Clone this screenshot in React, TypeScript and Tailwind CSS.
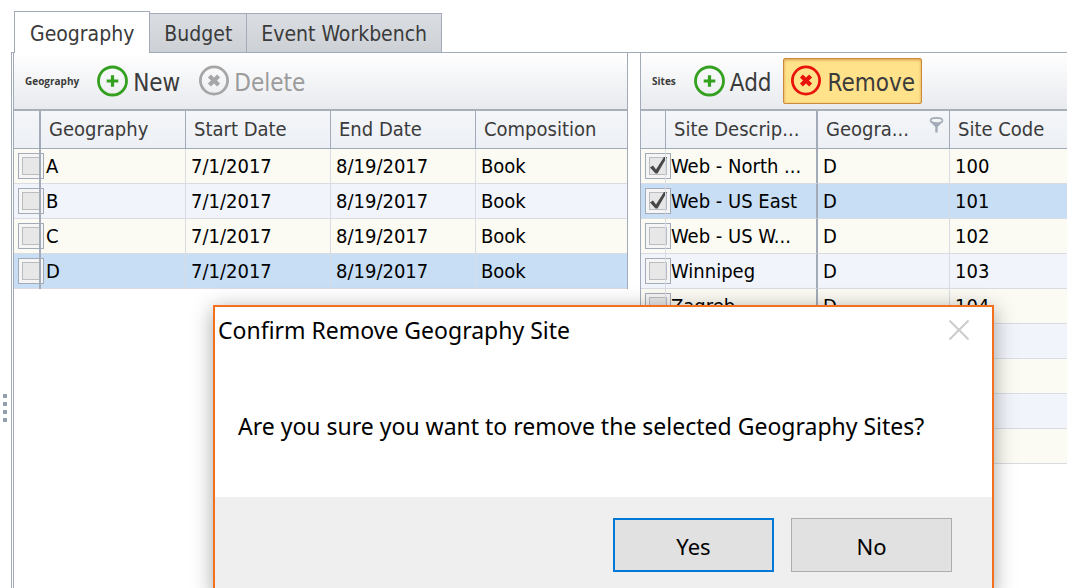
import { useState, type ReactNode } from "react";

const gridFont = "font-['DejaVu_Sans_Condensed','DejaVu_Sans',sans-serif]";
const dialogFont = "font-['Noto_Sans',sans-serif]";

function Tab({ active, children }: { active?: boolean; children: ReactNode }) {
  return (
    <button
      type="button"
      role="tab"
      aria-selected={!!active}
      className={
        active
          ? "relative z-10 h-[42px] border border-b-0 border-[#a4abb8] bg-white px-[15px] pt-1 text-[#3b3b3b]"
          : "h-10 border border-l-0 border-[#a4abb8] bg-linear-to-b from-[#dadee3] to-[#cdd1d6] px-[14px] pt-1 text-[#3b3b3b]"
      }
    >
      {children}
    </button>
  );
}

function CircleIcon({ kind, color }: { kind: "plus" | "cross"; color: string }) {
  return (
    <svg viewBox="0 0 32 32" className="size-8 shrink-0" fill="none" stroke={color} aria-hidden="true">
      {kind === "plus" ? (
        <>
          <circle cx="15.500" cy="16" r="14" strokeWidth="2.800" />
          <path d="M15.500 10.200v11.600M9.700 16h11.600" strokeWidth="3.200" />
        </>
      ) : (
        <>
          <circle cx="16" cy="15.500" r="13.600" strokeWidth="2.800" />
          <path d="M11.400 10.900l9.200 9.200M20.600 10.900l-9.200 9.200" strokeWidth="4.200" />
        </>
      )}
    </svg>
  );
}

function Toolbar({ title, children }: { title: string; children: ReactNode }) {
  return (
    <div className="flex h-[58px] items-center border-b-2 border-[#a9afba] bg-linear-to-b from-white to-[#e8eaee] pl-[11px] text-[24px] text-[#3b3b3b]">
      <span className="mr-[14px] font-['Open_Sans',sans-serif] text-[10px] font-bold">{title}</span>
      {children}
    </div>
  );
}

function ToolButton({ icon, color, disabled, highlighted, children }: {
  icon: "plus" | "cross";
  color: string;
  disabled?: boolean;
  highlighted?: boolean;
  children: ReactNode;
}) {
  return (
    <button
      type="button"
      disabled={disabled}
      className={
        "flex h-[46px] items-center rounded-xs border disabled:text-[#9b9b9b] " +
        (highlighted
          ? "gap-1.5 border-[#c98a3c] bg-[#ffe28a] px-[6px] shadow-[inset_0_1px_3px_#d99a4a]"
          : "gap-1 border-transparent px-[3px]")
      }
    >
      <CircleIcon kind={icon} color={color} />
      <span className="pt-1">{children}</span>
    </button>
  );
}

function RowCheck({ label, initial }: { label: string; initial?: boolean }) {
  const [checked, setChecked] = useState(!!initial);
  return (
    <span className="relative block size-[26px] border border-[#a4abb8] bg-[#f5f5f5] p-[3px]">
      <input
        type="checkbox"
        aria-label={label}
        checked={checked}
        onChange={() => setChecked(!checked)}
        className="peer block size-[18px] appearance-none border border-[#b9bcc0] bg-[#e7e7e7]"
      />
      <svg viewBox="0 0 26 26" className="pointer-events-none absolute -inset-px hidden size-[26px] peer-checked:block" aria-hidden="true">
        <path d="M5 14.500L8 12.500l3 4L19 4h3L12.500 20.500h-2z" fill="#484848" />
      </svg>
    </span>
  );
}

type Divider = "none" | "light" | "strong";

function HeadCell({ divider, children }: { divider: Divider; children?: ReactNode }) {
  const line =
    divider === "strong" ? "border-r-2 border-r-[#a4abb8]" : divider === "light" ? "border-r border-r-[#a4abb8]" : "";
  return (
    <th scope="col" className={`h-[38px] border-b border-b-[#a4abb8] pb-0.5 pl-2 text-left font-normal ${line}`}>
      {children}
    </th>
  );
}

function BodyCell({ divider, children }: { divider: Divider; children?: ReactNode }) {
  const line =
    divider === "strong" ? "border-r-2 border-r-[#a4abb8]" : divider === "light" ? "border-r border-r-[#d9dce2]" : "";
  return <td className={`h-[35px] border-b border-b-[#d9dce2] pl-[5px] ${line}`}>{children}</td>;
}

function CheckCell({ strong, children }: { strong?: boolean; children?: ReactNode }) {
  return (
    <td
      className={
        "relative h-[35px] border-b border-b-[#d9dce2] pl-1 after:absolute after:top-0 after:right-0 after:-bottom-px " +
        (strong ? "after:w-0.5 after:bg-[#a4abb8]" : "after:w-px after:bg-[#d9dce2]")
      }
    >
      {children}
    </td>
  );
}

const tableClass = "w-full table-fixed border-separate border-spacing-0 text-[20px] leading-6 whitespace-nowrap text-black";
const headClass = "bg-linear-to-b from-[#f4f6f9] to-[#eceff4] text-[#3b3b3b]";

function rowColor(index: number, selected: boolean) {
  if (selected) return "bg-[#c8def4]";
  return index % 2 === 0 ? "bg-[#fbfbf3]" : "bg-[#f1f4fa]";
}

function GeographyGrid() {
  return (
    <table className={tableClass}>
      <colgroup>
        <col className="w-[27px]" />
        <col className="w-[145px]" />
        <col className="w-[145px]" />
        <col className="w-[145px]" />
        <col />
      </colgroup>
      <thead>
        <tr className={headClass}>
          <HeadCell divider="strong" />
          <HeadCell divider="light">Geography</HeadCell>
          <HeadCell divider="light">Start Date</HeadCell>
          <HeadCell divider="light">End Date</HeadCell>
          <HeadCell divider="none">Composition</HeadCell>
        </tr>
      </thead>
      <tbody>
        {["A", "B", "C", "D"].map((name, i) => (
          <tr key={name} className={rowColor(i, name === "D")}>
            <CheckCell strong>
              <RowCheck label={`Select geography ${name}`} />
            </CheckCell>
            <BodyCell divider="light">{name}</BodyCell>
            <BodyCell divider="light">7/1/2017</BodyCell>
            <BodyCell divider="light">8/19/2017</BodyCell>
            <BodyCell divider="none">Book</BodyCell>
          </tr>
        ))}
      </tbody>
    </table>
  );
}

const sites = [
  { name: "Web - North ...", code: "100", checked: true },
  { name: "Web - US East", code: "101", checked: true },
  { name: "Web - US W...", code: "102", checked: false },
  { name: "Winnipeg", code: "103", checked: false },
  { name: "Zagreb", code: "104", checked: false },
];
const blankRows = [5, 6, 7, 8];

function SitesGrid() {
  return (
    <table className={tableClass}>
      <colgroup>
        <col className="w-[25px]" />
        <col className="w-[152px]" />
        <col className="w-[132px]" />
        <col />
      </colgroup>
      <thead>
        <tr className={headClass}>
          <HeadCell divider="light" />
          <HeadCell divider="strong">Site Descrip...</HeadCell>
          <HeadCell divider="light">
            <span className="flex items-start justify-between pr-[5px]">
              Geogra...
              <svg viewBox="0 0 15 16" className="h-4 w-[15px]" fill="none" stroke="#a4abb8" aria-hidden="true">
                <ellipse cx="7.500" cy="3.500" rx="6" ry="2.600" strokeWidth="1.600" />
                <path d="M1 4.500l5.300 5.500v5.500h2.400V10L14 4.500c-2.500 2.400-10.500 2.400-13 0z" fill="#a4abb8" stroke="none" />
              </svg>
            </span>
          </HeadCell>
          <HeadCell divider="none">Site Code</HeadCell>
        </tr>
      </thead>
      <tbody>
        {sites.map((site, i) => (
          <tr key={site.code} className={rowColor(i, site.code === "101")}>
            <CheckCell>
              <RowCheck label={`Select ${site.name}`} initial={site.checked} />
            </CheckCell>
            <BodyCell divider="strong">{site.name}</BodyCell>
            <BodyCell divider="light">D</BodyCell>
            <BodyCell divider="none">{site.code}</BodyCell>
          </tr>
        ))}
        {blankRows.map((i) => (
          <tr key={i} className={rowColor(i, false)}>
            <CheckCell />
            <BodyCell divider="strong" />
            <BodyCell divider="none" />
            <BodyCell divider="none" />
          </tr>
        ))}
      </tbody>
    </table>
  );
}

function ConfirmDialog() {
  return (
    <div
      role="dialog"
      aria-labelledby="confirm-title"
      className={`absolute top-[305px] left-[213px] z-20 w-[781px] border-2 border-[#f37021] bg-white text-[23px] text-black shadow-[0_4px_20px_rgba(0,0,0,0.35)] ${dialogFont}`}
    >
      <div className="flex h-[46px] items-center justify-between pr-[23px] pl-[3px]">
        <h2 id="confirm-title">Confirm Remove Geography Site</h2>
        <button type="button" aria-label="Close">
          <svg viewBox="0 0 20 20" className="size-5" fill="none" stroke="#cccccc" strokeWidth="2" aria-hidden="true">
            <path d="M.5.5l19 19M19.500.5l-19 19" />
          </svg>
        </button>
      </div>
      <p className="flex h-[144px] items-center pt-0.5 pl-[23px]">
        Are you sure you want to remove the selected Geography Sites?
      </p>
      <div className="flex justify-end gap-[17px] bg-[#efefef] pt-[21px] pr-10 pb-5 text-[22px]">
        <button type="button" className="h-[54px] w-[161px] border-2 border-[#0078d7] bg-[#e1e1e1] pt-0.5">
          Yes
        </button>
        <button type="button" className="h-[54px] w-[161px] border border-[#adadad] bg-[#e1e1e1] pt-0.5">
          No
        </button>
      </div>
    </div>
  );
}

export default function App() {
  return (
    <div className={`relative flex h-screen overflow-hidden bg-white ${gridFont}`}>
      <div className="flex w-[11px] shrink-0 flex-col items-start justify-end gap-1 pb-[166px] pl-[3px]">
        <span className="size-1 bg-[#94a0ad]" />
        <span className="size-1 bg-[#94a0ad]" />
        <span className="size-1 bg-[#94a0ad]" />
        <span className="size-1 bg-[#94a0ad]" />
      </div>
      <main className="flex min-w-0 grow flex-col pt-[11px]">
        <div role="tablist" className="flex items-end pl-[3px] text-[21px]">
          <Tab active>Geography</Tab>
          <Tab>Budget</Tab>
          <Tab>Event Workbench</Tab>
        </div>
        <div className="-mt-px flex grow gap-3 border-t border-l border-[#a4abb8] pl-px">
          <section className="w-[615px] shrink-0 border-l border-[#a4abb8]">
            <div className="border-r border-[#a4abb8]">
              <Toolbar title="Geography">
                <ToolButton icon="plus" color="#34a01f">New</ToolButton>
                <span className="w-[10px]" />
                <ToolButton icon="cross" color="#a6a6a6" disabled>Delete</ToolButton>
              </Toolbar>
              <GeographyGrid />
            </div>
          </section>
          <section className="min-w-0 grow">
            <div className="border-l border-[#a4abb8]">
              <Toolbar title="Sites">
                <ToolButton icon="plus" color="#34a01f">Add</ToolButton>
                <span className="w-[7px]" />
                <ToolButton icon="cross" color="#e8140c" highlighted>Remove</ToolButton>
              </Toolbar>
              <SitesGrid />
            </div>
          </section>
        </div>
      </main>
      <ConfirmDialog />
    </div>
  );
}
